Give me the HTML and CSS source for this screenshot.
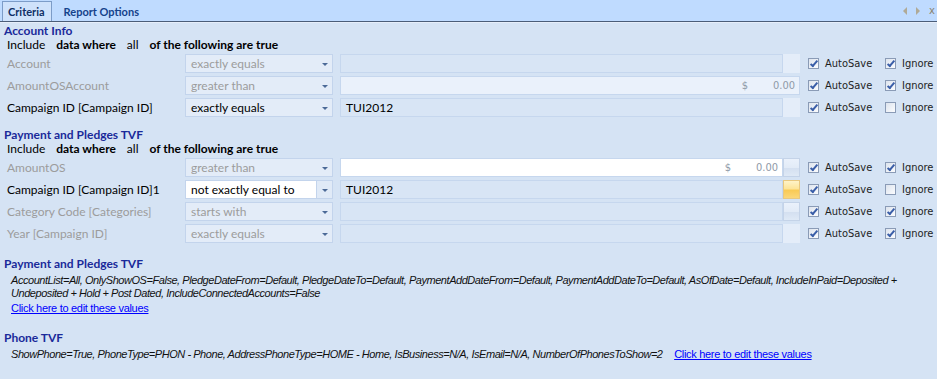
FILE: index.html
```html
<!DOCTYPE html>
<html lang="en">
<head>
    <meta charset="UTF-8">
    <title>Criteria</title>
    <link rel="stylesheet" href="styles.css">
</head>
<body>

    <div class="tabs">
        <div class="tab active">Criteria</div>
        <div class="tab">Report Options</div>
        <div class="tab-nav">
            <span class="nav-left"></span>
            <span class="nav-right"></span>
            <span class="nav-close">x</span>
        </div>
    </div>

    <div class="panel">
        <div class="group">
            <div class="group-title">Account Info</div>
            <div class="include"><span>Include</span><b>data where</b><span>all</span><b>of the following are true</b></div>

            <div class="row disabled">
                <span class="label">Account</span>
                <div class="combo"><span class="combo-text">exactly equals</span><span class="combo-btn"></span></div>
                <div class="field"></div>
                <div class="side flat"></div>
                <label class="check"><span class="box on"></span>AutoSave</label>
                <label class="check"><span class="box on"></span>Ignore</label>
            </div>
            <div class="row disabled">
                <span class="label">AmountOSAccount</span>
                <div class="combo"><span class="combo-text">greater than</span><span class="combo-btn"></span></div>
                <div class="field money light wide"><span>$</span><span>0.00</span></div>
                <label class="check"><span class="box on"></span>AutoSave</label>
                <label class="check"><span class="box on"></span>Ignore</label>
            </div>
            <div class="row">
                <span class="label">Campaign ID [Campaign ID]</span>
                <div class="combo"><span class="combo-text">exactly equals</span><span class="combo-btn"></span></div>
                <div class="field">TUI2012</div>
                <div class="side flat"></div>
                <label class="check"><span class="box on"></span>AutoSave</label>
                <label class="check"><span class="box"></span>Ignore</label>
            </div>
        </div>

        <div class="group">
            <div class="group-title">Payment and Pledges TVF</div>
            <div class="include"><span>Include</span><b>data where</b><span>all</span><b>of the following are true</b></div>

            <div class="row disabled">
                <span class="label">AmountOS</span>
                <div class="combo"><span class="combo-text">greater than</span><span class="combo-btn"></span></div>
                <div class="field money white"><span>$</span><span>0.00</span></div>
                <div class="side"></div>
                <label class="check"><span class="box on"></span>AutoSave</label>
                <label class="check"><span class="box on"></span>Ignore</label>
            </div>
            <div class="row">
                <span class="label">Campaign ID [Campaign ID]1</span>
                <div class="combo open"><span class="combo-text">not exactly equal to</span><span class="combo-btn"></span></div>
                <div class="field">TUI2012</div>
                <div class="side hot"></div>
                <label class="check"><span class="box on"></span>AutoSave</label>
                <label class="check"><span class="box"></span>Ignore</label>
            </div>
            <div class="row disabled">
                <span class="label">Category Code [Categories]</span>
                <div class="combo"><span class="combo-text">starts with</span><span class="combo-btn"></span></div>
                <div class="field"></div>
                <div class="side"></div>
                <label class="check"><span class="box on"></span>AutoSave</label>
                <label class="check"><span class="box on"></span>Ignore</label>
            </div>
            <div class="row disabled">
                <span class="label">Year [Campaign ID]</span>
                <div class="combo"><span class="combo-text">exactly equals</span><span class="combo-btn"></span></div>
                <div class="field"></div>
                <div class="side flat"></div>
                <label class="check"><span class="box on"></span>AutoSave</label>
                <label class="check"><span class="box on"></span>Ignore</label>
            </div>
        </div>

        <div class="summary">
            <div class="group-title">Payment and Pledges TVF</div>
            <p class="params">AccountList=All, OnlyShowOS=False, PledgeDateFrom=Default, PledgeDateTo=Default, PaymentAddDateFrom=Default, PaymentAddDateTo=Default, AsOfDate=Default, IncludeInPaid=Deposited + Undeposited + Hold + Post Dated, IncludeConnectedAccounts=False</p>
            <a href="#" class="edit-link">Click here to edit these values</a>
        </div>

        <div class="summary">
            <div class="group-title">Phone TVF</div>
            <p class="params">ShowPhone=True, PhoneType=PHON - Phone, AddressPhoneType=HOME - Home, IsBusiness=N/A, IsEmail=N/A, NumberOfPhonesToShow=2 <a href="#" class="edit-link inline">Click here to edit these values</a></p>
        </div>
    </div>

</body>
</html>
```

FILE: styles.css
```css
body {
    margin: 0;
    background: #d5e3f4;
    font-family: Lato, "Open Sans", sans-serif;
    font-size: 11px;
    color: #000;
    overflow: hidden;
}

.tabs {
    display: flex;
    align-items: flex-end;
    height: 21px;
    background: #bfdbff;
    border-bottom: 1px solid #4b5d78;
}

.tab {
    height: 19px;
    line-height: 19px;
    padding: 0 12px 0 12px;
    font-family: Lato, sans-serif;
    font-weight: bold;
    font-size: 11px;
    color: #15428b;
}

.tab.active {
    margin-left: 2px;
    padding: 0 6px 0 5px;
    background: #cfe2fb;
    border: 1px solid #7c9cc8;
    border-bottom: none;
    color: #0f2f66;
}

.tab-nav {
    margin-left: auto;
    display: flex;
    align-items: center;
    gap: 9px;
    height: 21px;
    margin-right: 2px;
}

.nav-left {
    border-top: 4px solid transparent;
    border-bottom: 4px solid transparent;
    border-right: 4px solid #b0aa97;
}

.nav-right {
    border-top: 4px solid transparent;
    border-bottom: 4px solid transparent;
    border-left: 4px solid #b0aa97;
}

.nav-close {
    color: #8a8470;
    font-size: 10px;
    font-family: "DejaVu Sans", sans-serif;
}

.panel {
    padding-top: 1px;
    border-top: 1px solid #e6eefa;
}

.group {
    margin-bottom: 11px;
}

.group + .group {
    margin-bottom: 14px;
}

.group-title {
    padding-left: 4px;
    height: 14px;
    line-height: 14px;
    font-family: Lato, sans-serif;
    font-weight: bold;
    font-size: 12px;
    color: #1a2a9a;
}

.include {
    display: flex;
    gap: 11px;
    padding-left: 7px;
    height: 14px;
    line-height: 14px;
    margin-bottom: 2px;
    font-size: 12px;
}

.row {
    display: flex;
    align-items: center;
    height: 19px;
    padding-left: 7px;
    margin-bottom: 3px;
}

.row > * {
    flex-shrink: 0;
}

.label {
    width: 178px;
    font-size: 12px;
}

.disabled .label,
.disabled .combo-text {
    color: #9c9c9c;
}

.combo {
    display: flex;
    width: 146px;
    height: 17px;
    border: 1px solid #c3d4ec;
    background: #e3ecf8;
    font-size: 12px;
}

.combo-text {
    flex: 1;
    padding-left: 5px;
    line-height: 17px;
}

.combo-btn {
    width: 15px;
    position: relative;
}

.combo-btn::after {
    content: "";
    position: absolute;
    left: 5px;
    top: 8px;
    border-left: 3px solid transparent;
    border-right: 3px solid transparent;
    border-top: 3px solid #4c6a97;
}

.combo.open {
    background: #fff;
}

.combo.open .combo-btn {
    background: #e0eaf7;
    border-left: 1px solid #c3d4ec;
}

.field {
    box-sizing: border-box;
    width: 443px;
    height: 19px;
    margin-left: 7px;
    padding-left: 5px;
    line-height: 18px;
    border: 1px solid #c6d7ee;
    background: #d8e5f5;
    font-size: 12px;
}

.field.wide {
    width: 460px;
}

.field.light {
    background: #eaf1fb;
}

.field.white {
    background: #fff;
}

.field.money {
    display: flex;
    justify-content: flex-end;
    gap: 25px;
    padding-right: 4px;
    color: #8f9aa8;
    font-family: "DejaVu Sans Condensed", sans-serif;
    font-size: 11px;
}

.side {
    box-sizing: border-box;
    width: 17px;
    height: 19px;
    border: 1px solid #c4d3e8;
    background: linear-gradient(#eaf1fb 0%, #e2ebf7 50%, #d3dff0 51%, #dfe9f6 100%);
}

.side.flat {
    border: none;
    background: #e4edf9;
}

.side.hot {
    border-color: #e8c880;
    background: linear-gradient(#fff3c8 0%, #fde59a 45%, #f9ca55 55%, #fbd779 100%);
}

.check {
    display: flex;
    align-items: center;
    gap: 6px;
    width: 77px;
    margin-left: 8px;
    font-family: "DejaVu Sans Condensed", sans-serif;
    font-size: 11px;
    color: #1e1e1e;
}

.check + .check {
    width: auto;
    margin-left: 0;
}

.box {
    box-sizing: border-box;
    width: 11px;
    height: 11px;
    border: 1px solid #8a9bb6;
    background: linear-gradient(135deg, #dde4ee, #fbfcfe);
    position: relative;
}

.box.on::after {
    content: "";
    position: absolute;
    left: 3px;
    top: 0;
    width: 2px;
    height: 6px;
    border-right: 2px solid #3a5ea8;
    border-bottom: 2px solid #3a5ea8;
    transform: rotate(40deg);
}

.summary {
    margin-bottom: 17px;
}

.summary .group-title {
    margin-bottom: 3px;
}

.params {
    margin: 0;
    padding: 0 25px 0 11px;
    font-family: "Liberation Sans", Arial, sans-serif;
    font-style: italic;
    font-size: 11px;
    line-height: 13px;
    letter-spacing: -0.45px;
    color: #111;
}

.edit-link {
    display: inline-block;
    margin: 2px 0 0 11px;
    font-family: "Liberation Sans", Arial, sans-serif;
    font-size: 11px;
    letter-spacing: -0.3px;
    color: #0000ff;
}

.edit-link.inline {
    margin: 0 0 0 9px;
    font-style: normal;
}
```
